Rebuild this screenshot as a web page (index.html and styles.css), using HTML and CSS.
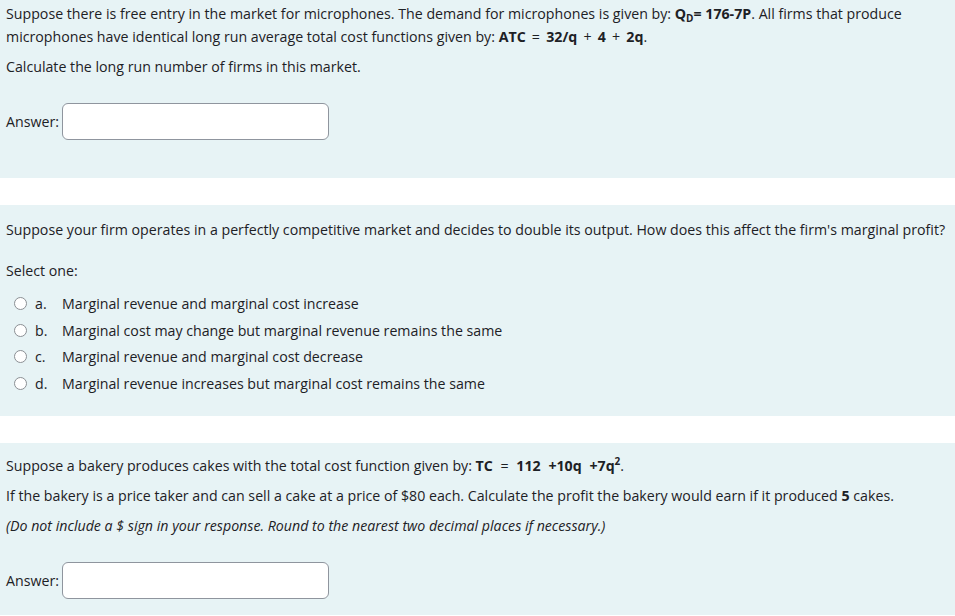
FILE: index.html
```html
<!DOCTYPE html>
<html>
<head>
<meta charset="utf-8">
<link rel="stylesheet" href="styles.css">
</head>
<body>
<div class="page">
  <section class="que first">
    <p>Suppose there is free entry in the market for microphones. The demand for microphones is given by: <b>Q<sub>D</sub>= 176-7P</b>. All firms that produce microphones have identical long run average total cost functions given by: <span class="eq"><b>ATC</b> = <b>32/q</b> + <b>4</b> + <b>2q</b></span>.</p>
    <p>Calculate the long run number of firms in this market.</p>
    <div class="answer"><label>Answer:</label><input type="text" class="field"></div>
  </section>

  <section class="que second">
    <p class="nowrap">Suppose your firm operates in a perfectly competitive market and decides to double its output. How does this affect the firm's marginal profit?</p>
    <p class="prompt">Select one:</p>
    <div class="options">
      <div class="opt"><span class="radio"></span><span class="letter">a.</span><span class="label">Marginal revenue and marginal cost increase</span></div>
      <div class="opt"><span class="radio"></span><span class="letter">b.</span><span class="label">Marginal cost may change but marginal revenue remains the same</span></div>
      <div class="opt"><span class="radio"></span><span class="letter">c.</span><span class="label">Marginal revenue and marginal cost decrease</span></div>
      <div class="opt"><span class="radio"></span><span class="letter">d.</span><span class="label">Marginal revenue increases but marginal cost remains the same</span></div>
    </div>
  </section>

  <section class="que third">
    <p>Suppose a bakery produces cakes with the total cost function given by: <span class="eq2"><b>TC</b> = <b>112</b> <b>+10q</b> <b>+7q<sup>2</sup></b></span>.</p>
    <p>If the bakery is a price taker and can sell a cake at a price of $80 each. Calculate the profit the bakery would earn if it produced <b>5</b> cakes.</p>
    <p><i>(Do not include a $ sign in your response. Round to the nearest two decimal places if necessary.)</i></p>
    <div class="answer"><label>Answer:</label><input type="text" class="field"></div>
  </section>
</div>
</body>
</html>
```

FILE: styles.css
```css
html, body {
  margin: 0;
  padding: 0;
  background: #ffffff;
}
body {
  font-family: "Open Sans", "Noto Sans", sans-serif;
  font-size: 14.2px;
  line-height: 23px;
  color: #1d2125;
}
.page {
  display: flex;
  flex-direction: column;
  gap: 27px;
}
.que {
  background: #e7f3f5;
  padding: 0 0 0 6px;
}
.que p {
  margin: 0 0 7px 0;
}
.nowrap {
  white-space: nowrap;
}
.first {
  padding-top: 2px;
  height: 178px;
  box-sizing: border-box;
}
.second {
  padding-top: 13px;
  padding-bottom: 21px;
}
.third {
  padding-top: 11px;
  padding-bottom: 16px;
}
b { font-weight: 700; }
.eq { word-spacing: 2.5px; }
.eq2 { word-spacing: 4px; }
sub {
  font-size: 10px;
  line-height: 10px;
  vertical-align: -3px;
}
sup {
  font-size: 10px;
  line-height: 10px;
  vertical-align: 6px;
}
.answer {
  display: flex;
  align-items: center;
  gap: 3px;
  margin-top: 25px;
}
.field {
  width: 267px;
  height: 37px;
  box-sizing: border-box;
  border: 1px solid #8f959e;
  border-radius: 6px;
  background: #fff;
  margin: 0;
  padding: 0 8px;
  font: inherit;
}
.prompt {
  margin-top: 18px !important;
  margin-bottom: 10px !important;
}
.options {
  display: flex;
  flex-direction: column;
  gap: 3.7px;
  padding-left: 8px;
}
.opt {
  display: flex;
  align-items: center;
}
.radio {
  width: 13px;
  height: 13px;
  box-sizing: border-box;
  border: 1px solid #8b8f94;
  border-radius: 50%;
  background: #fff;
  margin-right: 8px;
}
.letter {
  width: 27px;
}
```
